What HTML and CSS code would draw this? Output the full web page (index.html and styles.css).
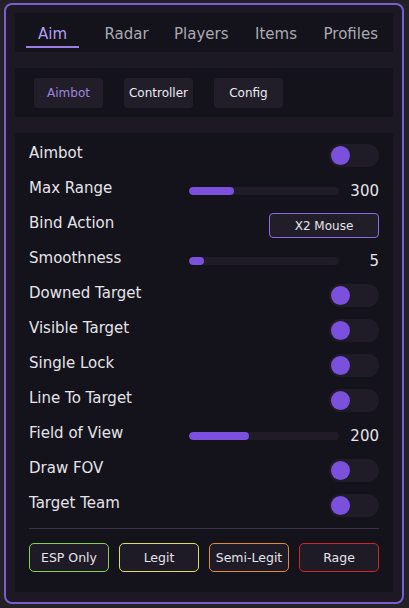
FILE: index.html
```html
<!DOCTYPE html>
<html>
<head>
<meta charset="utf-8">
<link rel="stylesheet" href="styles.css">
</head>
<body>
<div class="window">
  <div class="panel tabs">
    <div class="tab"><span class="tab-label active">Aim</span></div>
    <div class="tab"><span class="tab-label">Radar</span></div>
    <div class="tab"><span class="tab-label">Players</span></div>
    <div class="tab"><span class="tab-label">Items</span></div>
    <div class="tab"><span class="tab-label">Profiles</span></div>
  </div>
  <div class="panel subtabs">
    <div class="subtab active">Aimbot</div>
    <div class="subtab">Controller</div>
    <div class="subtab">Config</div>
  </div>
  <div class="panel content">
    <div class="row"><span class="label">Aimbot</span><div class="toggle"><div class="knob"></div></div></div>
    <div class="row"><span class="label">Max Range</span><div class="slider"><div class="fill" style="width:30%"></div></div><span class="value">300</span></div>
    <div class="row"><span class="label">Bind Action</span><div class="bind">X2 Mouse</div></div>
    <div class="row"><span class="label">Smoothness</span><div class="slider"><div class="fill" style="width:10%"></div></div><span class="value">5</span></div>
    <div class="row"><span class="label">Downed Target</span><div class="toggle"><div class="knob"></div></div></div>
    <div class="row"><span class="label">Visible Target</span><div class="toggle"><div class="knob"></div></div></div>
    <div class="row"><span class="label">Single Lock</span><div class="toggle"><div class="knob"></div></div></div>
    <div class="row"><span class="label">Line To Target</span><div class="toggle"><div class="knob"></div></div></div>
    <div class="row"><span class="label">Field of View</span><div class="slider"><div class="fill" style="width:40%"></div></div><span class="value">200</span></div>
    <div class="row"><span class="label">Draw FOV</span><div class="toggle"><div class="knob"></div></div></div>
    <div class="row"><span class="label">Target Team</span><div class="toggle"><div class="knob"></div></div></div>
    <div class="divider"></div>
    <div class="presets">
      <div class="preset esp">ESP Only</div>
      <div class="preset legit">Legit</div>
      <div class="preset semi">Semi-Legit</div>
      <div class="preset rage">Rage</div>
    </div>
  </div>
</div>
</body>
</html>
```

FILE: styles.css
```css
html, body {
  margin: 0;
  padding: 0;
  background: #222226;
  font-family: "DejaVu Sans", Verdana, sans-serif;
  color: #e4e4ea;
}
body {
  width: 409px;
  height: 608px;
  overflow: hidden;
}
.window {
  box-sizing: border-box;
  margin: 3px 0 0 4px;
  width: 400px;
  height: 601px;
  border: 2px solid #7b5bd2;
  border-radius: 8px;
  background: #1c1924;
  padding: 8px 9px 10px 9px;
  display: flex;
  flex-direction: column;
}
.panel {
  background: #14121a;
  border-radius: 3px;
}
.tabs {
  display: flex;
  height: 39px;
  box-sizing: border-box;
  padding: 10px 3px 0 5px;
}
.tab {
  flex: 1;
  display: flex;
  justify-content: center;
  align-items: flex-start;
}
.tab-label {
  font-size: 15px;
  line-height: 22px;
  padding: 0 12px 1px;
  border-bottom: 2px solid transparent;
  color: #a9a9b2;
}
.tab:first-child .tab-label {
  margin-left: -6px;
}
.tab-label.active {
  color: #b39df0;
  border-bottom-color: #9b7fe4;
}
.subtabs {
  margin-top: 16px;
  height: 49px;
  box-sizing: border-box;
  padding: 10px 19px 9px;
  display: flex;
  gap: 21px;
}
.subtab {
  min-width: 69px;
  height: 30px;
  box-sizing: border-box;
  padding: 0 4px;
  background: #211e2a;
  border-radius: 4px;
  font-size: 12px;
  display: flex;
  align-items: center;
  justify-content: center;
  color: #ececf2;
}
.subtab.active {
  color: #9e86dc;
}
.content {
  margin-top: 16px;
  flex: 1;
  padding: 5px 14px 0;
  display: flex;
  flex-direction: column;
}
.row {
  height: 35px;
  display: flex;
  align-items: center;
}
.label {
  flex: 1;
  font-size: 15px;
  margin-bottom: 5px;
}
.toggle {
  width: 50px;
  height: 23px;
  border-radius: 12px;
  background: #1f1c28;
  display: flex;
  align-items: center;
  padding-left: 2px;
  box-sizing: border-box;
}
.knob {
  width: 19px;
  height: 19px;
  border-radius: 50%;
  background: #7b50dc;
}
.slider {
  width: 150px;
  height: 8px;
  border-radius: 4px;
  background: #1f1c28;
  overflow: hidden;
}
.fill {
  height: 100%;
  border-radius: 4px;
  background: #7b50dc;
}
.value {
  width: 40px;
  text-align: right;
  font-size: 15px;
}
.bind {
  width: 110px;
  height: 25px;
  box-sizing: border-box;
  border: 1px solid #8a6ae0;
  border-radius: 4px;
  background: #211e2a;
  font-size: 12px;
  display: flex;
  align-items: center;
  justify-content: center;
}
.divider {
  margin-top: 5px;
  height: 1px;
  background: #38344a;
}
.presets {
  margin-top: 14px;
  display: flex;
  gap: 10px;
}
.preset {
  width: 80px;
  height: 29px;
  box-sizing: border-box;
  border-width: 1px;
  border-style: solid;
  border-radius: 5px;
  background: #1e1b26;
  font-size: 12.5px;
  display: flex;
  align-items: center;
  justify-content: center;
}
.preset.esp { border-color: #84d04c; }
.preset.legit { border-color: #d8de60; }
.preset.semi { border-color: #de8a42; }
.preset.rage { border-color: #cc2828; }
```
